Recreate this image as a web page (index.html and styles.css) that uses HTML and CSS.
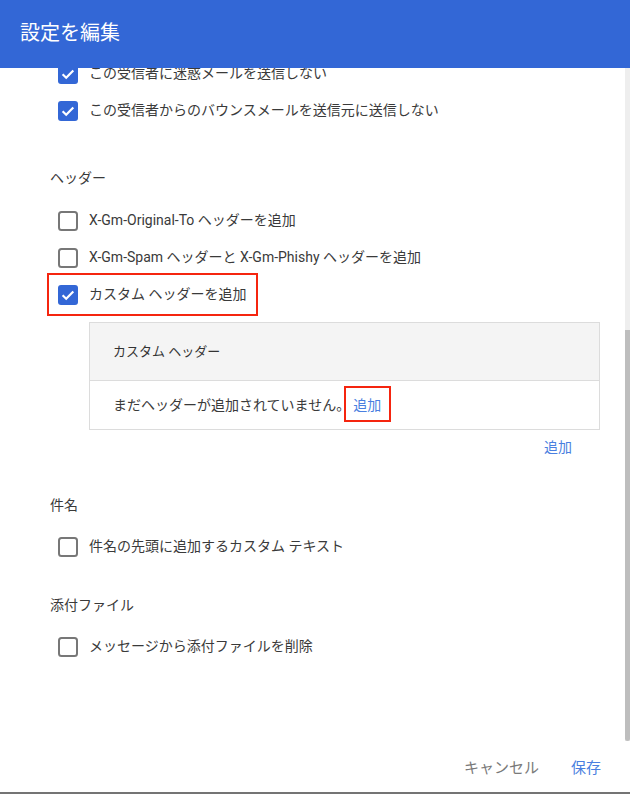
FILE: index.html
```html
<!DOCTYPE html>
<html lang="ja">
<head>
<meta charset="utf-8">
<title>設定を編集</title>
<link rel="stylesheet" href="styles.css">
</head>
<body>
<div class="dialog">
  <header class="dlg-head">設定を編集</header>
  <div class="scroll">
    <div class="content">
      <div class="row">
        <svg class="cb" viewBox="0 0 20 20"><rect width="20" height="20" rx="3" fill="#3367d6"/><path d="M4.6 10.3 L8.2 13.8 L15.3 6.5" fill="none" stroke="#fff" stroke-width="2.2"/></svg>
        <span>この受信者に迷惑メールを送信しない</span>
      </div>
      <div class="row">
        <svg class="cb" viewBox="0 0 20 20"><rect width="20" height="20" rx="3" fill="#3367d6"/><path d="M4.6 10.3 L8.2 13.8 L15.3 6.5" fill="none" stroke="#fff" stroke-width="2.2"/></svg>
        <span>この受信者からのバウンスメールを送信元に送信しない</span>
      </div>

      <div class="sec-title t-header">ヘッダー</div>
      <div class="rows">
        <div class="row">
          <svg class="cb" viewBox="0 0 20 20"><rect x="1" y="1" width="18" height="18" rx="2.5" fill="none" stroke="#777" stroke-width="2"/></svg>
          <span>X-Gm-Original-To ヘッダーを追加</span>
        </div>
        <div class="row">
          <svg class="cb" viewBox="0 0 20 20"><rect x="1" y="1" width="18" height="18" rx="2.5" fill="none" stroke="#777" stroke-width="2"/></svg>
          <span>X-Gm-Spam ヘッダーと X-Gm-Phishy ヘッダーを追加</span>
        </div>
        <div class="row hl">
          <svg class="cb" viewBox="0 0 20 20"><rect width="20" height="20" rx="3" fill="#3367d6"/><path d="M4.6 10.3 L8.2 13.8 L15.3 6.5" fill="none" stroke="#fff" stroke-width="2.2"/></svg>
          <span>カスタム ヘッダーを追加</span>
        </div>
      </div>

      <div class="table">
        <div class="th">カスタム ヘッダー</div>
        <div class="td">まだヘッダーが追加されていません。<span class="link boxed">追加</span></div>
      </div>
      <div class="add-row"><span class="link">追加</span></div>

      <div class="sec-title t-subject">件名</div>
      <div class="rows">
        <div class="row">
          <svg class="cb" viewBox="0 0 20 20"><rect x="1" y="1" width="18" height="18" rx="2.5" fill="none" stroke="#777" stroke-width="2"/></svg>
          <span>件名の先頭に追加するカスタム テキスト</span>
        </div>
      </div>

      <div class="sec-title t-attach">添付ファイル</div>
      <div class="rows">
        <div class="row">
          <svg class="cb" viewBox="0 0 20 20"><rect x="1" y="1" width="18" height="18" rx="2.5" fill="none" stroke="#777" stroke-width="2"/></svg>
          <span>メッセージから添付ファイルを削除</span>
        </div>
      </div>
    </div>
    <div class="sb-track"><div class="sb-thumb"></div></div>
  </div>
  <footer class="dlg-foot">
    <span class="btn cancel">キャンセル</span>
    <span class="btn save">保存</span>
  </footer>
</div>
</body>
</html>
```

FILE: styles.css
```css
html, body {
  margin: 0;
  padding: 0;
  background: #fff;
}
body {
  font-family: Roboto, "Noto Sans CJK JP", sans-serif;
  color: #333;
  font-size: 14px;
}
.dialog {
  width: 630px;
  height: 794px;
  display: flex;
  flex-direction: column;
  box-sizing: border-box;
  border-bottom: 2px solid #747474;
}
.dlg-head {
  height: 68px;
  flex: none;
  background: #3367d6;
  color: #fff;
  font-size: 20px;
  display: flex;
  align-items: center;
  padding: 0 0 5px 20px;
  box-sizing: border-box;
  position: relative;
  z-index: 2;
}
.scroll {
  flex: 1;
  position: relative;
  overflow: hidden;
}
.content {
  margin-top: -13px;
  padding: 0 30px 0 50px;
}
.row {
  display: flex;
  align-items: center;
  gap: 11px;
  height: 37px;
  padding-left: 8px;
  line-height: 20px;
  color: #3a3a3a;
}
.row span {
  position: relative;
  top: -1px;
}
.cb {
  width: 20px;
  height: 20px;
  flex: none;
}
.row.hl {
  width: fit-content;
  padding-right: 9px;
  outline: 2px solid #f5250f;
  outline-offset: 1px;
}
.sec-title {
  line-height: 20px;
  color: #3a3a3a;
}
.t-header { margin-top: 39px; }
.t-subject { margin-top: 38px; }
.t-attach { margin-top: 29.5px; }
.rows { margin-top: 14px; }
.t-subject + .rows, .t-attach + .rows { margin-top: 13.5px; }
.table {
  margin: 9px 0 0 39px;
  border: 1px solid #dcdcdc;
}
.th {
  height: 58px;
  box-sizing: border-box;
  padding-bottom: 3px;
  background: #f4f4f4;
  border-bottom: 1px solid #dcdcdc;
  display: flex;
  align-items: center;
  padding-left: 23px;
  font-size: 13px;
  color: #333;
}
.td {
  height: 48px;
  box-sizing: border-box;
  padding-bottom: 3px;
  display: flex;
  align-items: center;
  padding-left: 23px;
  color: #3a3a3a;
}
.link {
  color: #4a7fe0;
}
.boxed {
  position: relative;
  margin-left: 3px;
}
.boxed::after {
  content: "";
  position: absolute;
  left: -9px;
  right: -10px;
  top: -8px;
  bottom: -8px;
  border: 2px solid #f5250f;
}
.add-row {
  margin-top: 7px;
  line-height: 20px;
  text-align: right;
  padding-right: 28px;
}
.sb-track {
  position: absolute;
  top: 0;
  right: 0;
  bottom: 0;
  width: 5px;
  background: #eeeeee;
}
.sb-thumb {
  position: absolute;
  top: 262px;
  left: 0;
  right: 0;
  height: 411px;
  background: #bebebe;
  border-radius: 0 0 3px 3px;
}
.dlg-foot {
  height: 51px;
  flex: none;
  display: flex;
  align-items: center;
  justify-content: flex-end;
  gap: 32px;
  padding-right: 29px;
  font-size: 15px;
}
.cancel { color: #7a7a7a; }
.save { color: #4a7fe0; }
```
